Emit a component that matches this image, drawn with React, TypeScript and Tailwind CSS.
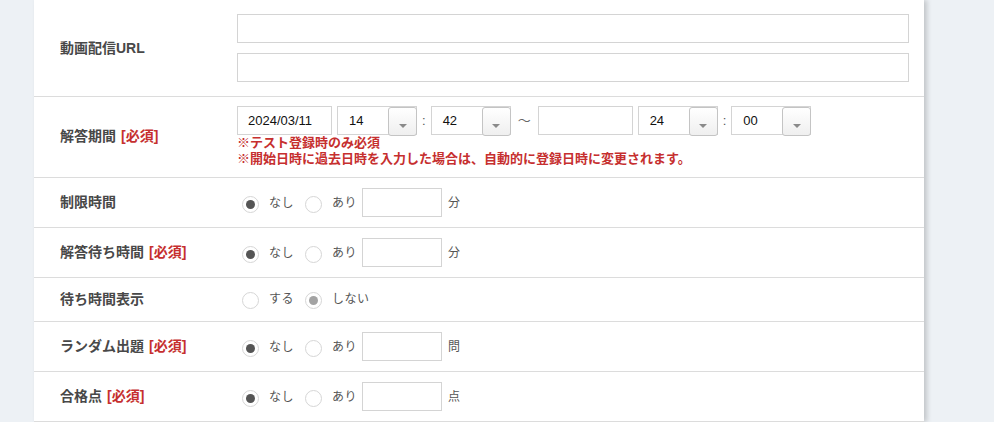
const FONT = "font-['Liberation_Sans','Noto_Sans_CJK_JP',sans-serif]";

function Required() {
  return <span className="ml-[5px] text-[#c62f2f]">[必須]</span>;
}

function Row({ label, required, className, children }: { label: string; required?: boolean; className: string; children: React.ReactNode }) {
  return (
    <div className={`flex items-center border-b border-[#dcdcdc] ${className}`}>
      <div className="w-[203px] shrink-0 pl-[26px] text-[14px] font-bold text-[#484848]">
        {label}
        {required && <Required />}
      </div>
      <div className="flex-1 pr-[15px]">{children}</div>
    </div>
  );
}

function TextBox({ value, className }: { value?: string; className: string }) {
  return (
    <div className={`flex h-[29px] items-center border border-[#d4d4d4] bg-white pl-[10px] text-[13px] text-[#111] ${className}`}>
      {value}
    </div>
  );
}

function Select({ value }: { value: string }) {
  return (
    <div className="flex h-[29px] w-[80px] items-center border border-[#d4d4d4] bg-white">
      <span className="flex-1 pl-[11px] text-[13px] text-[#111]">{value}</span>
      <div className="-mr-px mt-[2px] flex h-[29px] w-[29px] items-end justify-center rounded-[3px] border border-[#c4c4c4] bg-gradient-to-b from-white to-[#efefef] pb-[7px]">
        <div className="h-0 w-0 border-x-[4px] border-t-[4px] border-x-transparent border-t-[#8a8a8a]" />
      </div>
    </div>
  );
}

function Radio({ checked, muted }: { checked?: boolean; muted?: boolean }) {
  return (
    <div className="mt-[4px] flex h-[17px] w-[17px] shrink-0 items-center justify-center rounded-full border border-[#d6d6d6] bg-white">
      {checked && <div className={`h-[9px] w-[9px] rounded-full ${muted ? "bg-[#a3a3a3]" : "bg-[#555]"}`} />}
    </div>
  );
}

function Choice({ a, b, unit, second }: { a: string; b: string; unit?: string; second?: boolean }) {
  return (
    <div className="flex items-center pl-[5px] text-[12px] text-[#555]">
      <Radio checked={!second} />
      <span className="ml-[10px] tracking-[0.5px]">{a}</span>
      <div className="ml-[11px]">
        <Radio checked={second} muted />
      </div>
      <span className="ml-[10px] tracking-[0.5px]">{b}</span>
      {unit && (
        <>
          <div className="ml-[5px] h-[29px] w-[80px] border border-[#d4d4d4] bg-white" />
          <span className="ml-[6px]">{unit}</span>
        </>
      )}
    </div>
  );
}

export default function App() {
  return (
    <div className={`min-h-[422px] w-[994px] bg-[#edf1f5] ${FONT}`}>
      <div className="ml-[34px] w-[890px] bg-white shadow-[3px_0_5px_rgba(0,0,0,0.18)]">
        <Row label="動画配信URL" className="py-[14px]">
          <div className="flex flex-col gap-[10px]">
            <TextBox className="w-full" />
            <TextBox className="w-full" />
          </div>
        </Row>

        <Row label="解答期間" required className="pt-[9px] pb-[10px]">
          <div className="flex items-center">
            <TextBox value="2024/03/11" className="w-[95px]" />
            <div className="ml-[5px]"><Select value="14" /></div>
            <span className="mx-[5px] text-[13px] text-[#555]">:</span>
            <Select value="42" />
            <span className="mx-[7px] text-[13px] text-[#666]">〜</span>
            <TextBox className="w-[95px]" />
            <div className="ml-[5px]"><Select value="24" /></div>
            <span className="mx-[5px] text-[13px] text-[#555]">:</span>
            <Select value="00" />
          </div>
          <div className="text-[13px] font-bold leading-[16px] text-[#c62f2f]">
            <div>※テスト登録時のみ必須</div>
            <div>※開始日時に過去日時を入力した場合は、自動的に登録日時に変更されます。</div>
          </div>
        </Row>

        <Row label="制限時間" className="py-[10px]">
          <Choice a="なし" b="あり" unit="分" />
        </Row>
        <Row label="解答待ち時間" required className="py-[10px]">
          <Choice a="なし" b="あり" unit="分" />
        </Row>
        <Row label="待ち時間表示" className="py-[10px]">
          <div className="h-[23px]">
            <Choice a="する" b="しない" second />
          </div>
        </Row>
        <Row label="ランダム出題" required className="py-[10px]">
          <Choice a="なし" b="あり" unit="問" />
        </Row>
        <Row label="合格点" required className="py-[10px]">
          <Choice a="なし" b="あり" unit="点" />
        </Row>
      </div>
    </div>
  );
}
